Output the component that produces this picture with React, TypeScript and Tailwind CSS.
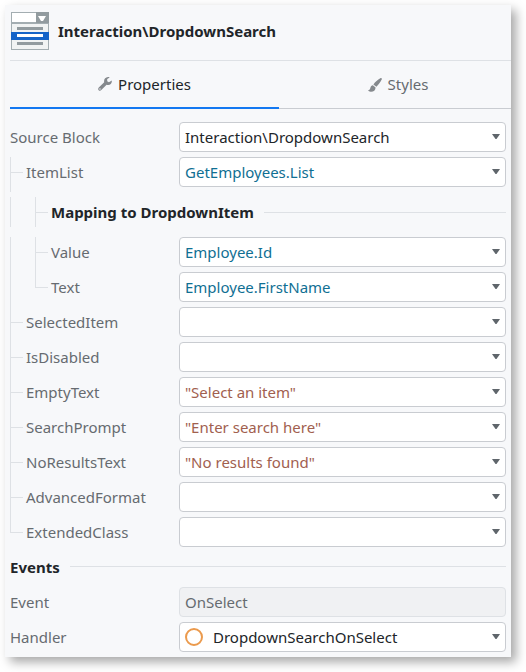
import { useState, type ReactNode } from "react";

type GuideKind = "line" | "tee" | "corner";

function Guide({ kind }: { kind: GuideKind }) {
  if (kind === "line") {
    return <span aria-hidden="true" className="w-[25px] shrink-0 border-l border-[#dee1e5]" />;
  }
  return (
    <span aria-hidden="true" className="flex w-4 shrink-0 flex-col">
      <span className="h-4 w-[13px] border-b border-l border-[#dee1e5]" />
      {kind === "tee" && <span className="w-[13px] flex-1 border-l border-[#dee1e5]" />}
    </span>
  );
}

function Row({
  id,
  label,
  guides = [],
  children,
}: {
  id: string;
  label: string;
  guides?: GuideKind[];
  children: ReactNode;
}) {
  return (
    <div className="flex h-[35px]">
      <div className="flex w-[169px] shrink-0">
        {guides.map((kind, i) => (
          <Guide key={i} kind={kind} />
        ))}
        <label htmlFor={id} className="h-[30px] leading-[30px] text-[#666b70]">
          {label}
        </label>
      </div>
      <div className="min-w-0 flex-1 pb-[5px]">{children}</div>
    </div>
  );
}

function Select({
  id,
  value,
  color = "text-[#212529]",
  icon,
}: {
  id: string;
  value: string;
  color?: string;
  icon?: ReactNode;
}) {
  return (
    <div className="relative flex h-[30px] items-center rounded-[4px] border border-[#c9ccd1] bg-white pl-[5px]">
      {icon}
      <select
        id={id}
        defaultValue={value}
        className={`h-full min-w-0 flex-1 appearance-none bg-transparent pr-6 outline-none ${color}`}
      >
        <option value={value}>{value}</option>
      </select>
      <svg
        aria-hidden="true"
        viewBox="0 0 8 5"
        className="pointer-events-none absolute top-[11px] right-[5px] h-[5px] w-2 fill-[#5f656b]"
      >
        <path d="M0 0h8L4.5 5h-1z" />
      </svg>
    </div>
  );
}

function BlockIcon() {
  return (
    <svg aria-hidden="true" viewBox="0 0 38 38" className="size-[38px] shrink-0">
      <path fill="#a3adb1" d="M0 0h38v38H0z" />
      <path fill="#fff" d="M1 1h24v9H1z" />
      <path fill="#929b9f" d="M25 0h13v11H25z" />
      <path fill="#fff" d="M27 4h8l-3 5h-2z" />
      <path fill="#f1f3f3" d="M1 12h36v8H1zM1 28h36v9H1z" />
      <path fill="#929b9f" d="M6 15h26v3H6zM6 30h26v3H6z" />
      <path fill="#1564c8" d="M0 20h38v8H0z" />
      <path fill="#fff" d="M6 22h26v3H6z" />
    </svg>
  );
}

function WrenchIcon() {
  return (
    <svg aria-hidden="true" viewBox="0 0 14 14" className="size-[14px] shrink-0 fill-[#85898d]">
      <path
        fillRule="evenodd"
        d="M11.700.500 9.200 2v2.200l1.700 1 2.900-1.600c.3 2.300-1.300 4.300-3.600 4.400-.6 0-1.100-.1-1.600-.3l-5.300 5.400c-.8.800-1.900.8-2.600.1s-.7-1.800.1-2.600l5.400-5.300C5.500 2.800 7.300.200 10 .100c.6 0 1.200.100 1.700.400zM2 11.300a.7.700 0 1 0 0 1.400.7.700 0 0 0 0-1.400z"
      />
    </svg>
  );
}

function BrushIcon() {
  return (
    <svg aria-hidden="true" viewBox="0 0 14 14" className="size-[14px] shrink-0 fill-[#85898d]">
      <path d="M12.300.300c1-.700 2 .200 1.400 1.200-1.400 2.700-3 5-5.300 7.300L5.400 6.400C7.300 3.800 9.700 1.800 12.300.300zM4.900 7.300l2.700 2.200c0 2.900-2.200 4.400-5 4.200-1.200-.1-2.100-.6-2.600-1.500 1.700-.1 2-.8 2.400-2.500.3-1.500 1.200-2.400 2.500-2.400z" />
    </svg>
  );
}

const tabs = [
  { name: "Properties", icon: <WrenchIcon />, size: "grow-[269]" },
  { name: "Styles", icon: <BrushIcon />, size: "grow-[226] pl-1.5" },
];

const parameters: { name: string; value: string; guide: GuideKind }[] = [
  { name: "SelectedItem", value: "", guide: "tee" },
  { name: "IsDisabled", value: "", guide: "tee" },
  { name: "EmptyText", value: '"Select an item"', guide: "tee" },
  { name: "SearchPrompt", value: '"Enter search here"', guide: "tee" },
  { name: "NoResultsText", value: '"No results found"', guide: "tee" },
  { name: "AdvancedFormat", value: "", guide: "tee" },
  { name: "ExtendedClass", value: "", guide: "corner" },
];

export default function App() {
  const [active, setActive] = useState("Properties");

  return (
    <div className="bg-white pt-[5px] pr-[15px] pb-[15px] pl-[5px] font-['Noto_Sans',sans-serif] text-[15px] text-[#212529]">
      <main className="bg-[#f7f8fa] pl-[5px] shadow-[5px_5px_10px_rgba(0,0,0,0.35)]">
        <header className="flex h-14 items-center gap-[9px] border-b border-[#dee1e5] pb-[3px] pl-px">
          <BlockIcon />
          <h1 className="font-bold">Interaction\DropdownSearch</h1>
        </header>

        <div role="tablist" className="flex h-12">
          {tabs.map((tab) => (
            <button
              key={tab.name}
              type="button"
              role="tab"
              aria-selected={active === tab.name}
              onClick={() => setActive(tab.name)}
              className={`flex basis-0 items-center justify-center gap-1.5 ${tab.size} ${
                active === tab.name
                  ? "border-b-2 border-[#1378f1] text-[#212529]"
                  : "border-b border-[#c9ccd1] text-[#666b70]"
              }`}
            >
              {tab.icon}
              {tab.name}
            </button>
          ))}
        </div>

        <div className="pt-[13px] pr-[5px]">
          <Row id="source" label="Source Block">
            <Select id="source" value="Interaction\DropdownSearch" />
          </Row>
          <Row id="item-list" label="ItemList" guides={["tee"]}>
            <Select id="item-list" value="GetEmployees.List" color="text-[#106f93]" />
          </Row>

          <div className="mt-[5px] mb-2.5 flex h-[30px]">
            <Guide kind="line" />
            <Guide kind="tee" />
            <h2 className="leading-[30px] font-bold">Mapping to DropdownItem</h2>
            <span className="ml-2.5 h-4 flex-1 border-b border-[#dee1e5]" />
          </div>

          <Row id="value" label="Value" guides={["line", "tee"]}>
            <Select id="value" value="Employee.Id" color="text-[#106f93]" />
          </Row>
          <Row id="text" label="Text" guides={["line", "corner"]}>
            <Select id="text" value="Employee.FirstName" color="text-[#106f93]" />
          </Row>

          {parameters.map((p) => (
            <Row key={p.name} id={p.name} label={p.name} guides={[p.guide]}>
              <Select id={p.name} value={p.value} color="text-[#a1604f]" />
            </Row>
          ))}

          <div className="mb-[5px] flex h-[30px]">
            <h2 className="leading-[30px] font-bold">Events</h2>
            <span className="ml-2.5 h-[15px] flex-1 border-b border-[#dee1e5]" />
          </div>

          <Row id="event" label="Event">
            <input
              id="event"
              readOnly
              value="OnSelect"
              className="h-[30px] w-full rounded-[4px] border border-[#dee1e5] bg-[#f0f1f3] px-[5px] text-[#666b70] outline-none"
            />
          </Row>
          <Row id="handler" label="Handler">
            <Select
              id="handler"
              value="DropdownSearchOnSelect"
              icon={
                <span
                  aria-hidden="true"
                  className="mr-2.5 size-[18px] shrink-0 rounded-full border-2 border-[#eb9a4d]"
                />
              }
            />
          </Row>
        </div>
      </main>
    </div>
  );
}
